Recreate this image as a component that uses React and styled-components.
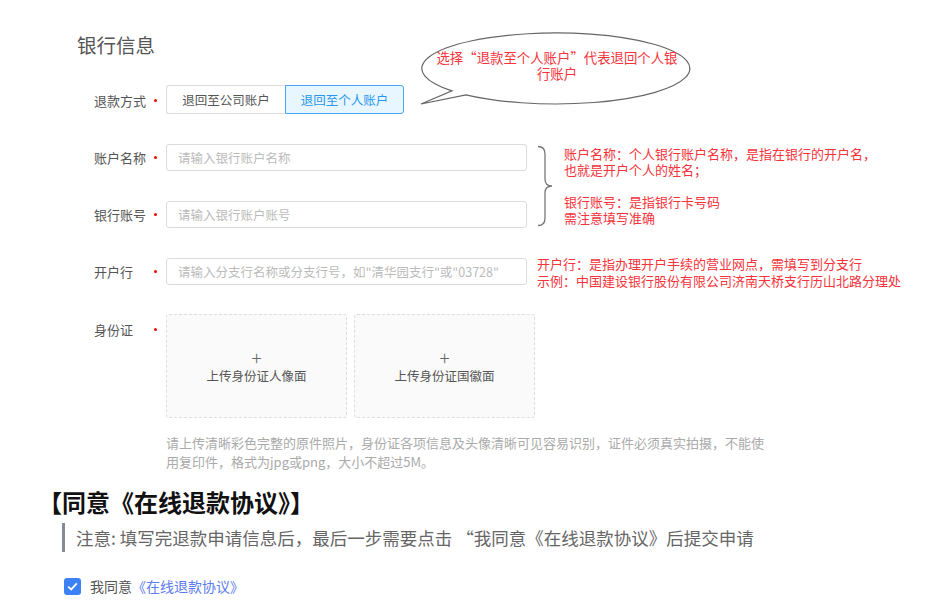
import React from "react";
import styled, { createGlobalStyle } from "styled-components";

const GlobalStyle = createGlobalStyle`
  body {
    margin: 0;
    background: #fff;
    font-family: "Noto Sans CJK SC", "Noto Sans", sans-serif;
  }
`;

const Page = styled.div`
  position: relative;
  width: 943px;
  min-height: 609px;
  padding-top: 33px;
  box-sizing: border-box;
  overflow: hidden;
`;

const Section = styled.div`
  padding-left: 77px;
`;

const SectionTitle = styled.h2`
  margin: 0;
  font-size: 19.5px;
  font-weight: 400;
  line-height: 24px;
  color: #555;
`;

const FormGrid = styled.div`
  display: grid;
  grid-template-columns: 72px 361px 1fr;
  grid-template-rows: 28px 27px 27px 27px auto;
  row-gap: 30px;
  margin: 29px 0 0 17px;
`;

const Label = styled.div`
  grid-column: 1;
  grid-row: ${(p) => p.$row};
  align-self: ${(p) => (p.$top ? "start" : "stretch")};
  height: ${(p) => (p.$top ? "29px" : "auto")};
  display: flex;
  align-items: center;
  justify-content: space-between;
  padding-right: 9px;
  font-size: 13px;
  color: #555;

  &::after {
    content: "";
    width: 3px;
    height: 3px;
    border-radius: 50%;
    background: #f00;
  }
`;

const Segmented = styled.div`
  grid-column: 2;
  grid-row: 1;
  display: flex;
  height: 29px;
  margin-top: -1px;
`;

const SegButton = styled.button`
  width: 119px;
  height: 29px;
  padding: 0;
  font-family: inherit;
  font-size: 12.5px;
  cursor: pointer;
  border: 1px solid ${(p) => (p.$active ? "#45a7f5" : "#dcdcdc")};
  background: ${(p) => (p.$active ? "#e8f6ff" : "#fff")};
  color: ${(p) => (p.$active ? "#2a97ee" : "#555")};
  border-radius: ${(p) => (p.$active ? "0 3px 3px 0" : "3px 0 0 3px")};
  ${(p) => !p.$active && "border-right: none;"}
`;

const Input = styled.input`
  grid-column: 2;
  grid-row: ${(p) => p.$row};
  box-sizing: border-box;
  width: 361px;
  height: 27px;
  padding: 0 11px;
  border: 1px solid #dcdcdc;
  border-radius: 3px;
  font-family: inherit;
  font-size: 12.5px;
  color: #333;
  outline: none;

  &::placeholder {
    color: #bbb;
  }
`;

const BraceNote = styled.div`
  grid-column: 3;
  grid-row: 2 / span 2;
  display: flex;
  align-items: center;
  gap: 11px;
  padding-left: 10px;
`;

const NoteStack = styled.div`
  display: flex;
  flex-direction: column;
  align-items: flex-start;
  justify-content: space-between;
  height: 80px;
`;

const Note = styled.div`
  grid-column: ${(p) => (p.$row ? 3 : "auto")};
  grid-row: ${(p) => p.$row || "auto"};
  align-self: ${(p) => (p.$row ? "center" : "auto")};
  padding-left: ${(p) => (p.$row ? "10px" : "0")};
  font-size: 13px;
  line-height: ${(p) => (p.$row ? "17px" : "16px")};
  color: #f5333b;
  white-space: nowrap;
`;

const UploadField = styled.div`
  grid-column: 2 / span 2;
  grid-row: 5;
  margin-top: -1px;
`;

const UploadRow = styled.div`
  display: flex;
  gap: 7px;
`;

const UploadBox = styled.div`
  box-sizing: border-box;
  width: 181px;
  height: 104px;
  border: 1px dashed #dedede;
  border-radius: 3px;
  background: #fafafa;
  display: flex;
  flex-direction: column;
  align-items: center;
  justify-content: center;
  color: #555;
  font-size: 12.5px;
  line-height: 18px;
  cursor: pointer;
`;

const Plus = styled.span`
  font-size: 19px;
  line-height: 20px;
  font-weight: 300;
  color: #666;
`;

const Hint = styled.p`
  margin: 15px 0 0;
  width: 605px;
  font-size: 13px;
  line-height: 19px;
  color: #aaa;
`;

const Bubble = styled.div`
  position: absolute;
  left: 420px;
  top: 31px;
  width: 272px;
  height: 76px;

  svg {
    position: absolute;
    inset: 0;
    overflow: visible;
  }
`;

const BubbleText = styled.div`
  position: relative;
  padding-top: 18px;
  padding-left: 2px;
  text-align: center;
  font-size: 13.4px;
  line-height: 16px;
  color: #f5333b;
  white-space: nowrap;
`;

const QuoteMark = styled.span`
  display: inline-block;
  width: 1em;
  text-align: ${(p) => (p.$close ? "left" : "right")};
`;

const AgreeTitle = styled.h2`
  margin: 15px 0 0 38px;
  font-size: 24px;
  line-height: 32px;
  font-weight: 700;
  color: #111;
`;

const Quote = styled.blockquote`
  margin: 5px 0 0 62px;
  padding-left: 11px;
  border-left: 3px solid #858a94;
  font-size: 17.5px;
  line-height: 29px;
  color: #666;
`;

const CheckRow = styled.label`
  display: flex;
  align-items: center;
  gap: 9px;
  margin: 24px 0 0 64px;
  font-size: 14px;
  color: #555;
  cursor: pointer;
`;

const CheckBox = styled.span`
  display: inline-flex;
  align-items: center;
  justify-content: center;
  width: 17px;
  height: 17px;
  border-radius: 3px;
  background: #3c82f6;
`;

const Link = styled.a`
  color: #5b7bf0;
  text-decoration: none;
  margin-left: -9px;
`;

const Brace = () => (
  <svg width="16" height="82" viewBox="0 0 16 82">
    <path
      d="M1 1.5 Q8 1.5 8 9 L8 34 Q8 41 15 41 Q8 41 8 48 L8 73 Q8 80.5 1 80.5"
      fill="none"
      stroke="#777"
      strokeWidth="1.3"
    />
  </svg>
);

const BubbleShape = () => (
  <svg width="272" height="76" viewBox="0 0 272 76">
    <path
      d="M46 63.8 A134 35.5 0 1 0 32 59.9 L1 73 Z"
      fill="#fff"
      stroke="#666"
      strokeWidth="1.2"
      strokeLinejoin="miter"
    />
  </svg>
);

export default function App() {
  return (
    <Page>
      <GlobalStyle />
      <Section>
        <SectionTitle>银行信息</SectionTitle>
        <FormGrid>
          <Label $row={1}>退款方式</Label>
          <Segmented>
            <SegButton>退回至公司账户</SegButton>
            <SegButton $active>退回至个人账户</SegButton>
          </Segmented>

          <Label $row={2}>账户名称</Label>
          <Input $row={2} placeholder="请输入银行账户名称" />

          <Label $row={3}>银行账号</Label>
          <Input $row={3} placeholder="请输入银行账户账号" />

          <BraceNote>
            <Brace />
            <NoteStack>
              <Note>
                账户名称：个人银行账户名称，是指在银行的开户名，
                <br />
                也就是开户个人的姓名；
              </Note>
              <Note>
                银行账号：是指银行卡号码
                <br />
                需注意填写准确
              </Note>
            </NoteStack>
          </BraceNote>

          <Label $row={4}>开户行</Label>
          <Input
            $row={4}
            placeholder={'请输入分支行名称或分支行号，如"清华园支行"或"03728"'}
          />
          <Note $row={4}>
            开户行：是指办理开户手续的营业网点，需填写到分支行
            <br />
            示例：中国建设银行股份有限公司济南天桥支行历山北路分理处
          </Note>

          <Label $row={5} $top>
            身份证
          </Label>
          <UploadField>
            <UploadRow>
              <UploadBox>
                <Plus>+</Plus>
                上传身份证人像面
              </UploadBox>
              <UploadBox>
                <Plus>+</Plus>
                上传身份证国徽面
              </UploadBox>
            </UploadRow>
            <Hint>
              请上传清晰彩色完整的原件照片，身份证各项信息及头像清晰可见容易识别，证件必须真实拍摄，不能使用复印件，格式为jpg或png，大小不超过5M。
            </Hint>
          </UploadField>
        </FormGrid>
      </Section>

      <Bubble>
        <BubbleShape />
        <BubbleText>
          选择<QuoteMark>“</QuoteMark>退款至个人账户<QuoteMark $close>”</QuoteMark>代表退回个人银
          <br />
          行账户
        </BubbleText>
      </Bubble>

      <AgreeTitle>【同意《在线退款协议》】</AgreeTitle>
      <Quote>
        注意: 填写完退款申请信息后，最后一步需要点击 “我同意《在线退款协议》后提交申请
      </Quote>
      <CheckRow>
        <CheckBox>
          <svg width="11" height="9" viewBox="0 0 11 9">
            <path d="M1.2 4.6 L4.2 7.4 L9.8 1.4" fill="none" stroke="#fff" strokeWidth="1.8" />
          </svg>
        </CheckBox>
        我同意
        <Link href="#">《在线退款协议》</Link>
      </CheckRow>
    </Page>
  );
}
